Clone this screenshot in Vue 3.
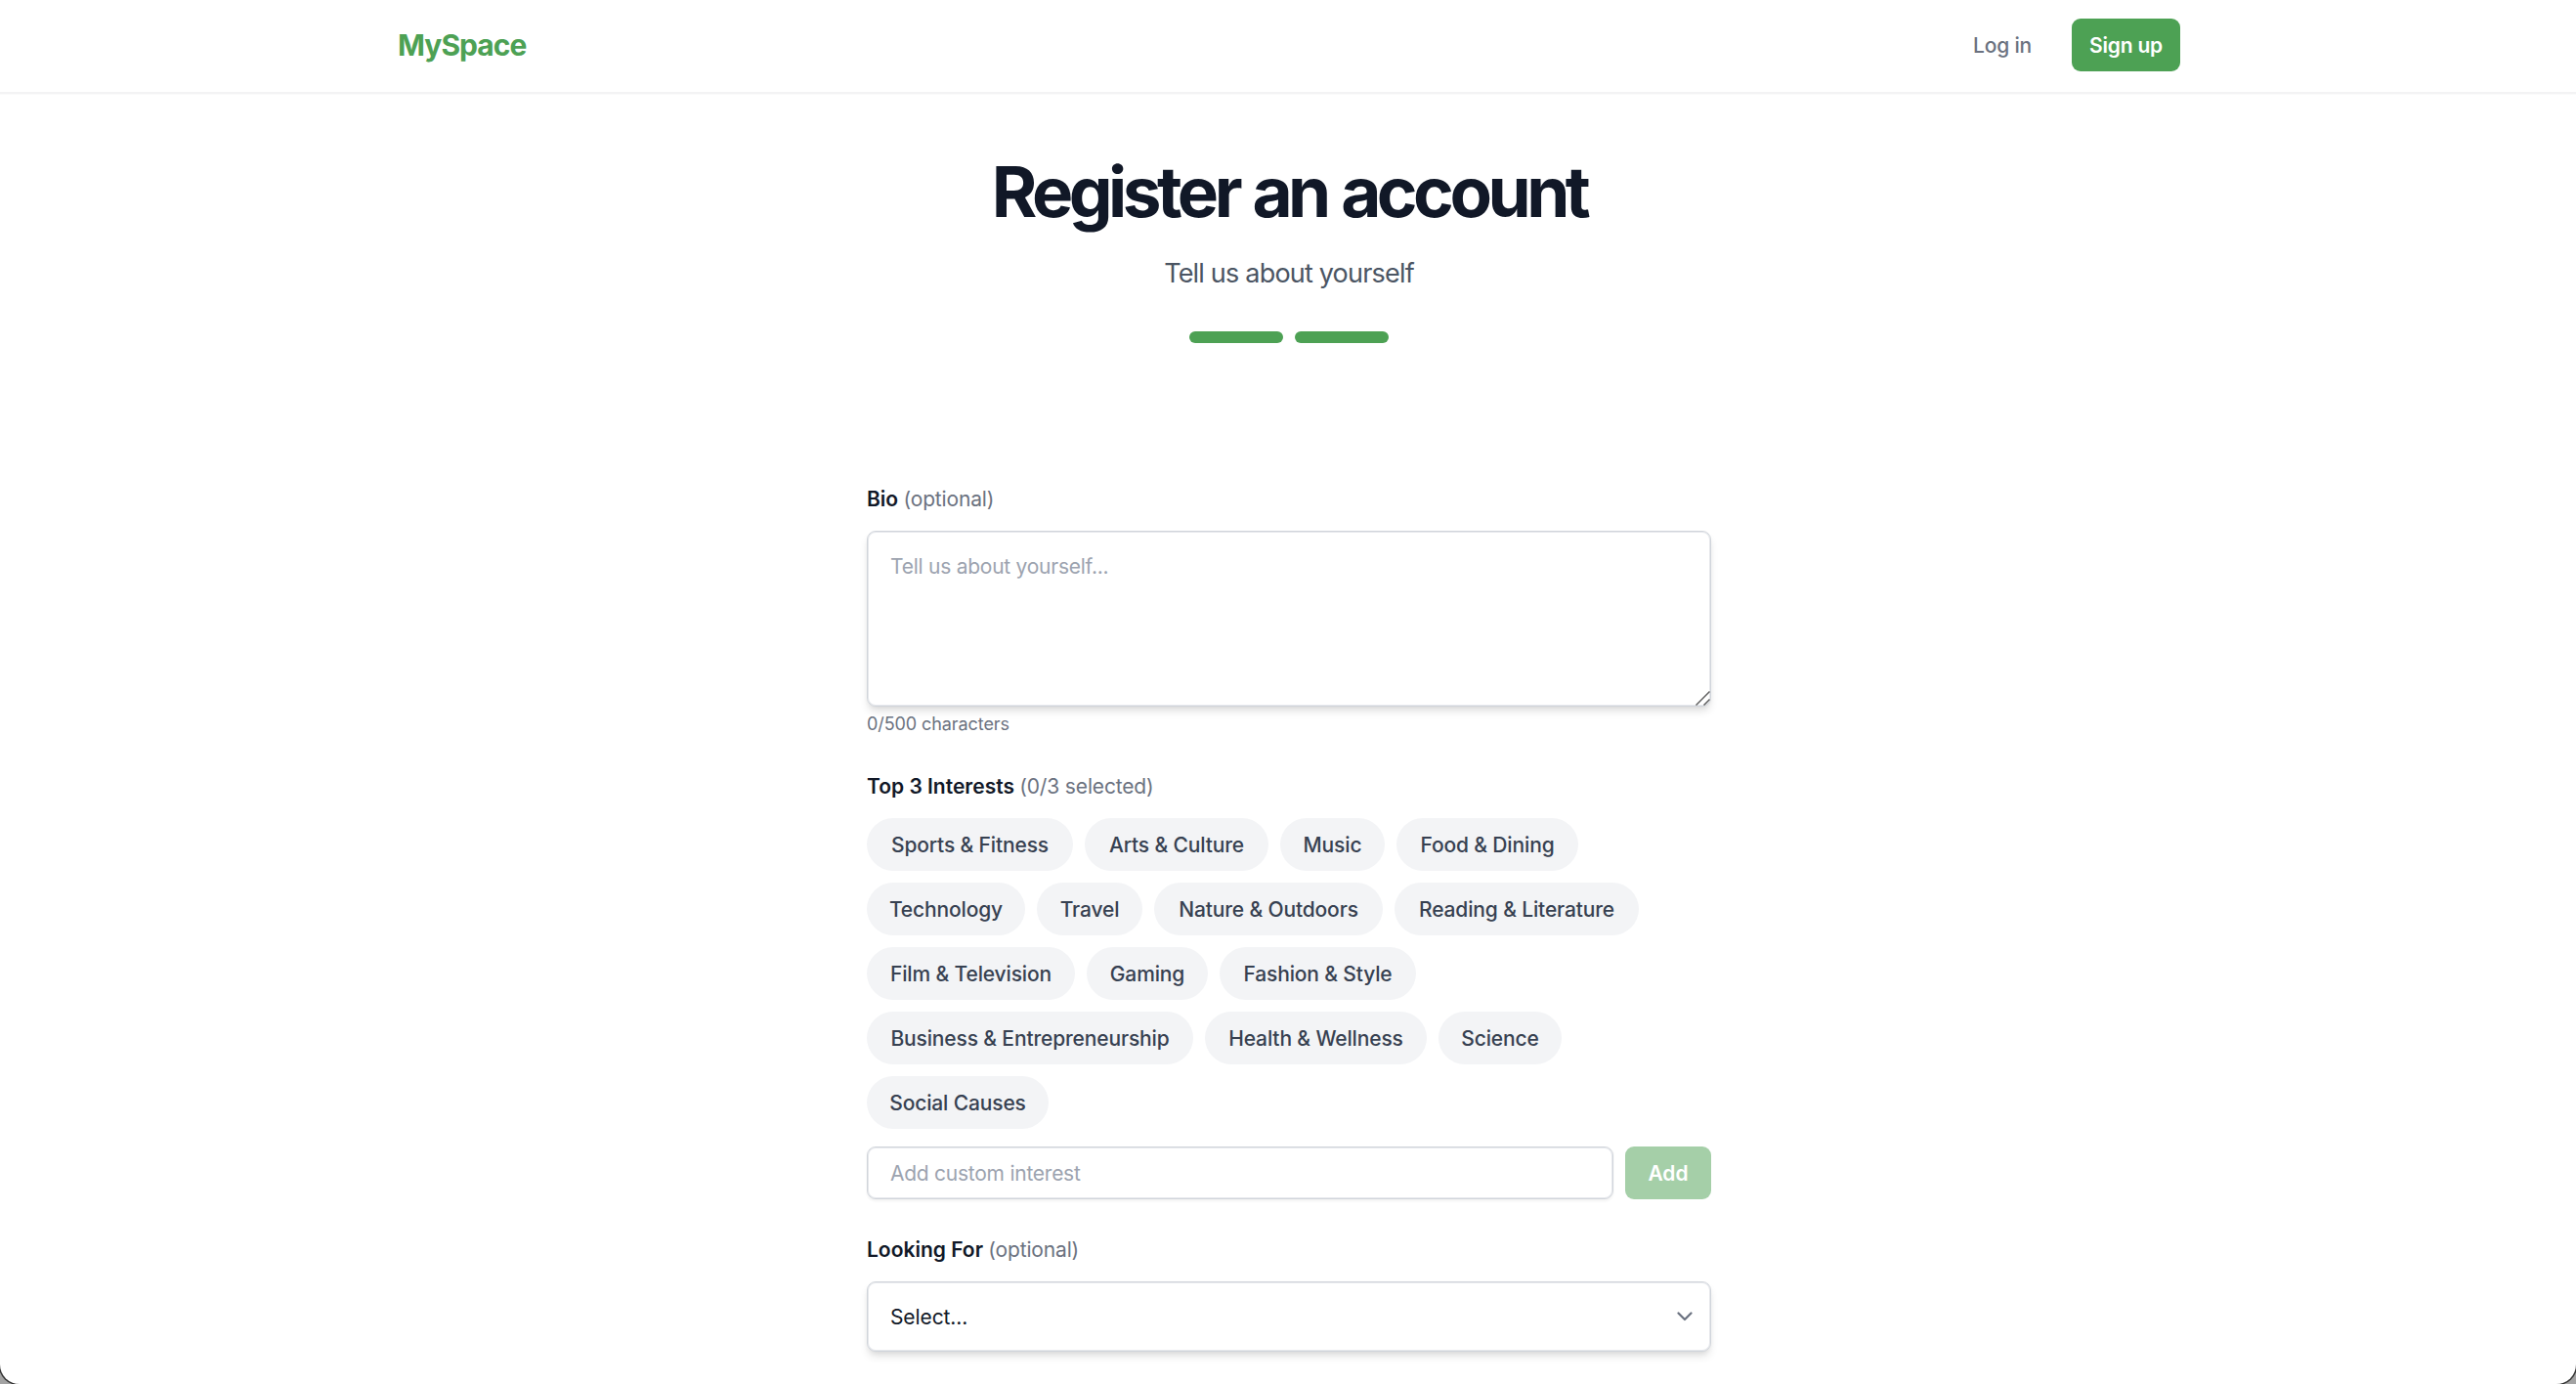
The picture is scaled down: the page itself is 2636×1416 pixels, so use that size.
<template>
  <div class="window">
    <header class="navbar">
      <div class="navbar-inner">
        <a class="brand" href="#">MySpace</a>
        <nav class="nav-actions">
          <a class="login-link" href="#">Log in</a>
          <a class="signup-button" href="#">Sign up</a>
        </nav>
      </div>
    </header>

    <main class="content">
      <h1 class="title">Register an account</h1>
      <p class="subtitle">Tell us about yourself</p>
      <div class="steps">
        <span v-for="step in 2" :key="step" class="step"></span>
      </div>

      <form class="form" @submit.prevent>
        <div class="field">
          <label class="label" for="bio">Bio <span class="hint">(optional)</span></label>
          <div class="textarea-wrap">
            <textarea
              id="bio"
              v-model="bio"
              class="control textarea"
              maxlength="500"
              placeholder="Tell us about yourself..."
            ></textarea>
            <svg class="resize-handle" viewBox="0 0 15 15" aria-hidden="true">
              <path d="M0.5 14.5 14.5 0.5M8.5 14.5 14.5 8.5" />
            </svg>
          </div>
          <p class="counter">{{ bio.length }}/500 characters</p>
        </div>

        <div class="field">
          <div class="label">
            Top 3 Interests
            <span class="hint">({{ selected.length }}/3 selected)</span>
          </div>
          <div class="chips">
            <button
              v-for="interest in interests"
              :key="interest.name"
              type="button"
              class="chip"
              :class="{ active: selected.includes(interest.name) }"
              :style="{ width: interest.width ? `${interest.width}px` : 'auto' }"
              @click="toggleInterest(interest.name)"
            >
              {{ interest.name }}
            </button>
          </div>
          <div class="custom-row">
            <input
              v-model="customInterest"
              class="control custom-input"
              type="text"
              placeholder="Add custom interest"
            />
            <button
              type="button"
              class="add-button"
              :disabled="!customInterest.trim()"
              @click="addInterest"
            >
              Add
            </button>
          </div>
        </div>

        <div class="field">
          <label class="label" for="looking">Looking For <span class="hint">(optional)</span></label>
          <div class="select-wrap">
            <select id="looking" v-model="lookingFor" class="control select">
              <option value="">Select...</option>
              <option value="friends">Friends</option>
              <option value="dating">Dating</option>
              <option value="networking">Networking</option>
            </select>
            <svg class="chevron" viewBox="0 0 16 10" aria-hidden="true">
              <path d="M1.5 1.5 8 8 14.5 1.5" />
            </svg>
          </div>
        </div>
      </form>
    </main>
  </div>
</template>

<script setup>
import { ref } from "vue";

const bio = ref("");
const selected = ref([]);
const customInterest = ref("");
const lookingFor = ref("");

const interests = ref([
  { name: "Sports & Fitness", width: 211 },
  { name: "Arts & Culture", width: 188 },
  { name: "Music", width: 107 },
  { name: "Food & Dining", width: 186 },
  { name: "Technology", width: 162 },
  { name: "Travel", width: 108 },
  { name: "Nature & Outdoors", width: 234 },
  { name: "Reading & Literature", width: 250 },
  { name: "Film & Television", width: 213 },
  { name: "Gaming", width: 124 },
  { name: "Fashion & Style", width: 201 },
  { name: "Business & Entrepreneurship", width: 334 },
  { name: "Health & Wellness", width: 227 },
  { name: "Science", width: 126 },
  { name: "Social Causes", width: 186 },
]);

const toggleInterest = (name) => {
  if (selected.value.includes(name)) {
    selected.value = selected.value.filter((item) => item !== name);
  } else if (selected.value.length < 3) {
    selected.value.push(name);
  }
};

const addInterest = () => {
  const name = customInterest.value.trim();
  if (!interests.value.some((item) => item.name === name)) {
    interests.value.push({ name });
  }
  toggleInterest(name);
  customInterest.value = "";
};
</script>

<style>
body {
  margin: 0;
  overflow: hidden;
  background: #a3a3a3;
}
</style>

<style scoped>
.window {
  box-sizing: border-box;
  height: 100vh;
  overflow: hidden;
  background: #fff;
  border-radius: 0 0 20px 20px;
  box-shadow: 0 0 0 1.5px #333;
  color: #111827;
  font-family: Inter, "Liberation Sans", sans-serif;
  font-size: 21px;
}

.window * {
  box-sizing: border-box;
}

a {
  text-decoration: none;
}

.navbar {
  height: 96px;
  padding: 0 0 2px 2px;
  border-bottom: 2px solid #f3f3f4;
  box-shadow: 0 1px 0 #fafafa;
}

.navbar-inner {
  display: flex;
  align-items: center;
  justify-content: space-between;
  width: 1824px;
  height: 92px;
  margin: 0 auto;
}

.brand {
  color: #4da154;
  font-size: 30px;
  font-weight: 700;
  letter-spacing: -0.95px;
}

.nav-actions {
  display: flex;
  align-items: center;
  gap: 41px;
}

.login-link {
  color: #6b7280;
  font-weight: 500;
  letter-spacing: -0.2px;
}

.signup-button {
  width: 111px;
  height: 54px;
  border-radius: 9px;
  background: #4da154;
  color: #fff;
  font-weight: 600;
  line-height: 56px;
  letter-spacing: -0.2px;
  text-align: center;
}

.content {
  padding: 64px 0 0 2px;
  text-align: center;
}

.title {
  margin: 0;
  font-size: 71px;
  font-weight: 650;
  line-height: 72px;
  letter-spacing: -4.5px;
  word-spacing: 2px;
}

.subtitle {
  margin: 27px 0 0;
  color: #4b5563;
  font-size: 27px;
  line-height: 42px;
  letter-spacing: -0.8px;
}

.steps {
  display: flex;
  justify-content: center;
  gap: 12px;
  margin-top: 38px;
}

.step {
  width: 96px;
  height: 12px;
  border-radius: 6px;
  background: #4da154;
}

.form {
  display: flex;
  flex-direction: column;
  gap: 34px;
  width: 864px;
  margin: 142px auto 0;
  text-align: left;
}

.label {
  display: block;
  margin-bottom: 14px;
  font-weight: 600;
  line-height: 36px;
}

.hint {
  color: #6b7280;
  font-weight: 400;
  letter-spacing: -0.15px;
}

.control {
  display: block;
  width: 100%;
  margin: 0;
  border: 1px solid #d1d5db;
  border-radius: 9px;
  outline: none;
  background: #fff;
  color: #111827;
  font: inherit;
  letter-spacing: -0.1px;
}

.control::placeholder {
  color: #9ca3af;
  letter-spacing: -0.25px;
  opacity: 1;
}

.textarea-wrap,
.select-wrap {
  position: relative;
}

.textarea {
  height: 180px;
  padding: 18px 23px;
  line-height: 36px;
  resize: none;
}

.textarea,
.select {
  box-shadow: inset 0 0 0 1px #e6e8ec,
    0 6px 9px -1.5px rgba(0, 0, 0, 0.1),
    0 3px 6px -3px rgba(0, 0, 0, 0.1);
}

.resize-handle {
  position: absolute;
  right: 1px;
  bottom: 1px;
  width: 15px;
  height: 15px;
  fill: none;
  stroke: #636363;
  stroke-width: 1.5;
}

.counter {
  margin: 6px 0 0;
  color: #6b7280;
  font-size: 18px;
  line-height: 24px;
  letter-spacing: -0.08px;
}

.chips {
  display: flex;
  flex-wrap: wrap;
  gap: 12px;
}

.chip {
  height: 54px;
  padding: 0;
  border: 0;
  border-radius: 27px;
  background: #f3f4f6;
  color: #374151;
  font: inherit;
  font-weight: 500;
  letter-spacing: -0.14px;
  white-space: nowrap;
  cursor: pointer;
}

.chip.active {
  background: #4da154;
  color: #fff;
}

.custom-row {
  display: flex;
  gap: 12px;
  margin-top: 18px;
}

.custom-input {
  flex: 1;
  height: 54px;
  padding: 0 23px;
  box-shadow: inset 0 0 0 1px #e6e8ec, 0 1.5px 3px rgba(0, 0, 0, 0.05);
}

.add-button {
  width: 88px;
  height: 54px;
  padding: 0;
  border: 0;
  border-radius: 9px;
  background: #4da154;
  color: #fff;
  font: inherit;
  font-weight: 600;
}

.add-button:disabled {
  opacity: 0.5;
}

.select {
  height: 72px;
  padding: 0 23px;
  appearance: none;
}

.chevron {
  position: absolute;
  top: 31px;
  right: 19px;
  width: 16px;
  height: 10px;
  fill: none;
  stroke: #6b7280;
  stroke-width: 2.2;
  stroke-linecap: round;
  stroke-linejoin: round;
}
</style>
